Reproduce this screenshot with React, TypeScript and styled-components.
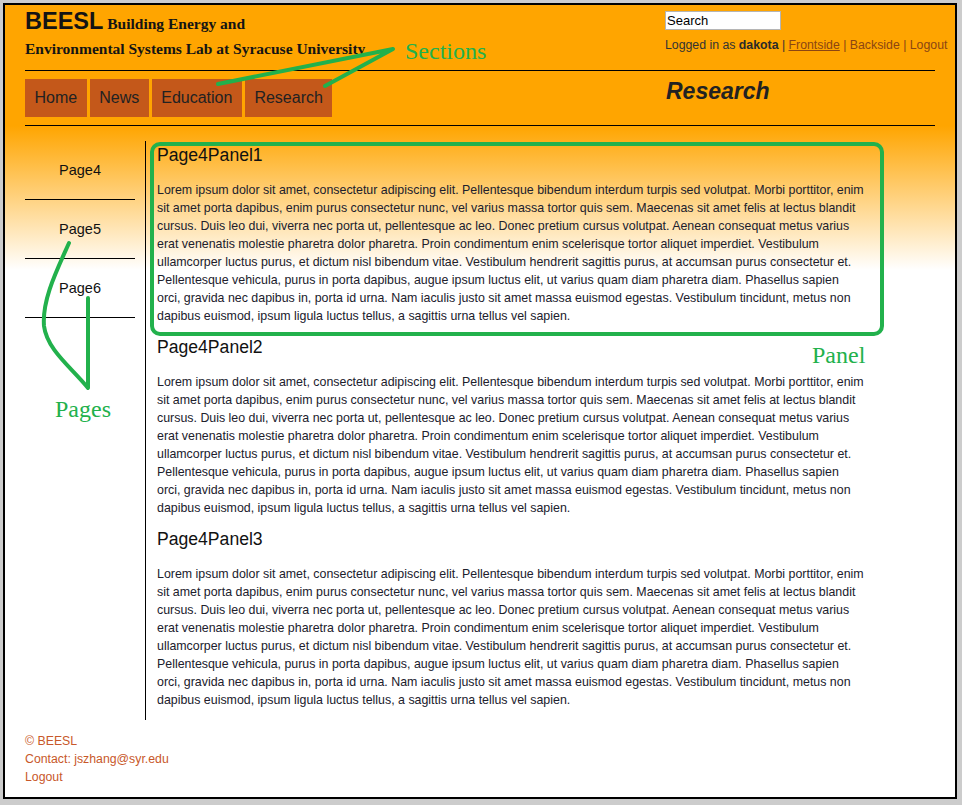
import React from "react";
import styled, { createGlobalStyle } from "styled-components";

const GlobalStyle = createGlobalStyle`
  html, body { margin: 0; padding: 0; background: #cccccc; }
  body { font-family: "Liberation Sans", Arial, sans-serif; }
`;

const Frame = styled.div`
  position: relative;
  width: 962px;
  min-height: 805px;
  padding: 3px 0 0 3px;
  box-sizing: border-box;
`;

const Page = styled.div`
  width: 954px;
  box-sizing: border-box;
  border: 2px solid #000;
  background: linear-gradient(to bottom, #ffa500 0px, #ffa500 121px, #ffffff 265px);
  padding: 0 20px 11px;
`;

const TopRow = styled.div`
  display: grid;
  grid-template-columns: 640px 1fr;
  height: 66px;
  box-sizing: border-box;
  padding-top: 4px;
  border-bottom: 1px solid #000;
`;

const Title = styled.div`
  font-family: "Liberation Serif", "Times New Roman", serif;
  font-weight: bold;
  font-size: 15.5px;
  line-height: 25px;
  color: #141414;
`;

const Acronym = styled.span`
  font-family: "Liberation Sans", Arial, sans-serif;
  font-size: 23.5px;
  margin-right: 0px;
`;

const UserBox = styled.div`
  padding-top: 2px;
  font-size: 12.3px;
  color: #333;
`;

const SearchInput = styled.input`
  display: block;
  width: 116px;
  height: 19px;
  box-sizing: border-box;
  border: 1px solid #b5b5b5;
  padding: 0 1px;
  margin: 0;
  font: 13px "Liberation Sans", Arial, sans-serif;
  color: #000;
  background: #fff;
  outline: none;
`;

const LoggedLine = styled.div`
  margin-top: 6px;
  line-height: 18px;
  white-space: nowrap;
`;

const UserName = styled.b`
  color: #2a2a2a;
`;

const Links = styled.span`
  color: #8b4513;
`;

const TopLink = styled.a<{ $underline?: boolean }>`
  color: #8b4513;
  text-decoration: ${(p) => (p.$underline ? "underline" : "none")};
  cursor: pointer;
`;

const NavRow = styled.div`
  display: grid;
  grid-template-columns: 640px 1fr;
  padding: 8px 0;
  border-bottom: 1px solid #000;
`;

const NavList = styled.nav`
  display: flex;
  gap: 3px;
`;

const NavItem = styled.a`
  height: 38px;
  display: flex;
  align-items: center;
  padding: 0 9.5px;
  background: #c4581a;
  color: #222;
  font-size: 16px;
  text-decoration: none;
  cursor: pointer;
`;

const SectionTitle = styled.div`
  font-size: 23px;
  font-weight: bold;
  font-style: italic;
  line-height: 26px;
  margin-top: -1px;
  padding-left: 1px;
  color: #222;
`;

const Main = styled.div`
  display: flex;
  margin-top: 15px;
`;

const Sidebar = styled.div`
  width: 110px;
  margin-right: 10px;
  display: flex;
  flex-direction: column;
`;

const SideItem = styled.a`
  height: 58px;
  border-bottom: 1px solid #000;
  display: flex;
  align-items: center;
  justify-content: center;
  font-size: 14.5px;
  color: #111;
  text-decoration: none;
`;

const Content = styled.div`
  flex: 1;
  border-left: 1px solid #000;
  padding: 3px 70px 11px 11px;
  display: flex;
  flex-direction: column;
  gap: 11px;
`;

const Panel = styled.section``;

const PanelTitle = styled.h2`
  margin: 0;
  font-size: 17.6px;
  font-weight: normal;
  line-height: 22px;
  color: #111;
`;

const PanelText = styled.p`
  margin: 15px 0 0;
  font-size: 12.4px;
  line-height: 18px;
  color: #20202c;
`;

const Footer = styled.footer`
  padding-top: 12px;
  font-size: 12.3px;
  line-height: 18px;
  color: #c8582a;
`;

const FooterLine = styled.div``;

const Overlay = styled.svg`
  position: absolute;
  top: 0;
  left: 0;
  pointer-events: none;
`;

const LOREM =
  "Lorem ipsum dolor sit amet, consectetur adipiscing elit. Pellentesque bibendum interdum turpis sed volutpat. Morbi porttitor, enim sit amet porta dapibus, enim purus consectetur nunc, vel varius massa tortor quis sem. Maecenas sit amet felis at lectus blandit cursus. Duis leo dui, viverra nec porta ut, pellentesque ac leo. Donec pretium cursus volutpat. Aenean consequat metus varius erat venenatis molestie pharetra dolor pharetra. Proin condimentum enim scelerisque tortor aliquet imperdiet. Vestibulum ullamcorper luctus purus, et dictum nisl bibendum vitae. Vestibulum hendrerit sagittis purus, at accumsan purus consectetur et. Pellentesque vehicula, purus in porta dapibus, augue ipsum luctus elit, ut varius quam diam pharetra diam. Phasellus sapien orci, gravida nec dapibus in, porta id urna. Nam iaculis justo sit amet massa euismod egestas. Vestibulum tincidunt, metus non dapibus euismod, ipsum ligula luctus tellus, a sagittis urna tellus vel sapien.";

const navItems = ["Home", "News", "Education", "Research"];
const pages = ["Page4", "Page5", "Page6"];
const panels = ["Page4Panel1", "Page4Panel2", "Page4Panel3"];

const GREEN = "#22b14c";

export default function App() {
  return (
    <Frame>
      <GlobalStyle />
      <Page>
        <TopRow>
          <Title>
            <Acronym>BEESL</Acronym> Building Energy and
            <br />
            Environmental Systems Lab at Syracuse University
          </Title>
          <UserBox>
            <SearchInput defaultValue="Search" />
            <LoggedLine>
              Logged in as <UserName>dakota</UserName> |{" "}
              <Links>
                <TopLink $underline>Frontside</TopLink> | <TopLink>Backside</TopLink> |{" "}
                <TopLink>Logout</TopLink>
              </Links>
            </LoggedLine>
          </UserBox>
        </TopRow>
        <NavRow>
          <NavList>
            {navItems.map((n) => (
              <NavItem key={n}>{n}</NavItem>
            ))}
          </NavList>
          <SectionTitle>Research</SectionTitle>
        </NavRow>
        <Main>
          <Sidebar>
            {pages.map((p) => (
              <SideItem key={p}>{p}</SideItem>
            ))}
          </Sidebar>
          <Content>
            {panels.map((p) => (
              <Panel key={p}>
                <PanelTitle>{p}</PanelTitle>
                <PanelText>{LOREM}</PanelText>
              </Panel>
            ))}
          </Content>
        </Main>
        <Footer>
          <FooterLine>© BEESL</FooterLine>
          <FooterLine>Contact: jszhang@syr.edu</FooterLine>
          <FooterLine>Logout</FooterLine>
        </Footer>
      </Page>
      <Overlay width="962" height="805" viewBox="0 0 962 805">
        <g fill="none" stroke={GREEN} strokeWidth="4" strokeLinecap="round" strokeLinejoin="round">
          <rect x="152" y="144" width="730" height="190" rx="8" ry="8" />
          <path d="M218 84 L393 49 L325 86" />
          <path d="M69 243 C 56 272, 42 300, 44 326 C 47 350, 72 368, 88 388 L 88 298" />
        </g>
        <g fill={GREEN} fontFamily='"Liberation Serif", "Times New Roman", serif' fontSize="24">
          <text x="405" y="59">Sections</text>
          <text x="812" y="363">Panel</text>
          <text x="55" y="417">Pages</text>
        </g>
      </Overlay>
    </Frame>
  );
}
